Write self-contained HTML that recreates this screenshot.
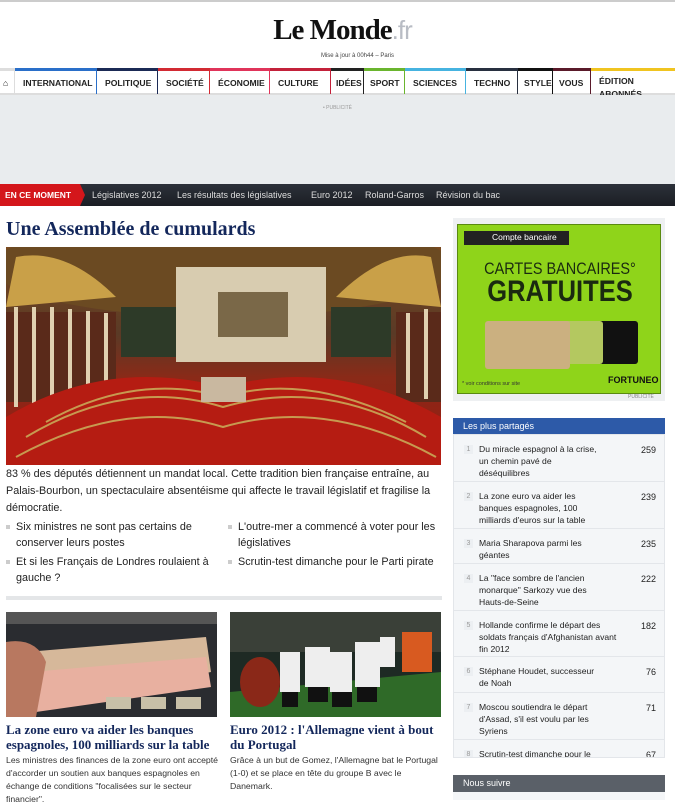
<!DOCTYPE html>
<html><head><meta charset="utf-8"><style>
*{margin:0;padding:0;box-sizing:border-box}
body{width:675px;height:800px;overflow:hidden;background:#fff;font-family:"Liberation Sans",Arial,sans-serif;position:relative;color:#222}
.abs{position:absolute}
.topline{left:0;top:0;width:675px;height:2px;background:#ccc}
.logo{left:0;width:675px;top:14px;text-align:center;font-family:"Liberation Serif",serif;font-weight:bold;font-size:29px;color:#111;letter-spacing:-1px;padding-left:10px}
.logo span{color:#b8bcc4;font-family:"Liberation Sans",sans-serif;font-weight:normal;font-size:26px}
.maj{left:0;width:675px;top:53px;text-align:center;font-size:6px;color:#444;padding-left:40px}
.nav{top:68px;left:0;width:675px;height:27px;border-bottom:2px solid #ddd}
.nav div{position:absolute;top:0;height:26px;border-top:3px solid;border-right:1px solid #ddd;font-size:8.6px;font-weight:bold;padding:7px 0 0 8px;color:#222;white-space:nowrap}
.pub{top:95px;left:0;width:675px;height:89px;background:#e9ecee}
.moment{top:184px;left:0;width:675px;height:22px;background:linear-gradient(#2c313a,#1b1e24);color:#fff;font-size:9px}
.moment .red{position:absolute;left:0;top:0;height:22px;width:80px;background:#d4161b;font-weight:bold;padding:6px 0 0 5px;font-size:8.5px}
.moment .red:after{content:"";position:absolute;right:-5px;top:0;border-left:5px solid #d4161b;border-top:11px solid transparent;border-bottom:11px solid transparent}
.moment span{position:absolute;top:6px;color:#ddd}
h1{position:absolute;left:6px;top:218px;font-family:"Liberation Serif",serif;font-size:20px;color:#13275b;font-weight:bold}
.p{font-size:10.8px;line-height:17px;color:#222}
.li{font-size:10.8px;line-height:16px;color:#222}
.li:before{content:"";position:absolute;left:-10px;top:6px;width:4px;height:4px;background:#ccc}
.h2{font-family:"Liberation Serif",serif;font-weight:bold;font-size:13px;line-height:15px;color:#13275b}
.sm{font-size:8.7px;line-height:13px;color:#333}
.side{left:453px;width:212px}
.row{position:absolute;left:0;width:212px;border-bottom:1px solid #e3e6ea;font-size:8.6px;line-height:12px;color:#222}
.row .n{position:absolute;left:10px;top:10px;width:9px;height:9px;background:#eceff2;font-size:7px;color:#999;text-align:center;line-height:9px}
.row .t{position:absolute;left:25px;top:8px;width:132px}
.row .c{position:absolute;right:10px;top:9px;font-size:9px}
</style></head><body>
<div class="abs topline"></div>
<div class="abs logo">Le Monde<span>.fr</span></div>
<div class="abs maj">Mise à jour à 00h44 – Paris</div>
<div class="abs nav">
<div style="left:0;width:15px;border-color:#ddd;padding-left:3px">&#8962;</div>
<div style="left:15px;width:82px;border-color:#2a6fc9">INTERNATIONAL</div>
<div style="left:97px;width:61px;border-color:#1b2a55">POLITIQUE</div>
<div style="left:158px;width:52px;border-color:#d22a33">SOCIÉTÉ</div>
<div style="left:210px;width:60px;border-color:#e0345a">ÉCONOMIE</div>
<div style="left:270px;width:61px;border-color:#c3213a">CULTURE</div>
<div style="left:331px;width:33px;border-color:#222;padding-left:5px">IDÉES</div>
<div style="left:364px;width:41px;border-color:#6ab52e;padding-left:6px">SPORT</div>
<div style="left:405px;width:61px;border-color:#46b3e0">SCIENCES</div>
<div style="left:466px;width:52px;border-color:#283040">TECHNO</div>
<div style="left:518px;width:35px;border-color:#111;padding-left:6px">STYLE</div>
<div style="left:553px;width:38px;border-color:#5a1a2a;padding-left:6px">VOUS</div>
<div style="left:591px;width:84px;border-color:#f0c420;line-height:13px;padding-top:4px;border-right:none">ÉDITION<br>ABONNÉS</div>
</div>
<div class="abs pub"><div style="text-align:center;font-size:5px;color:#999;margin-top:10px">• PUBLICITÉ</div></div>
<div class="abs moment"><div class="red">EN CE MOMENT</div>
<span style="left:92px">Législatives 2012</span><span style="left:177px">Les résultats des législatives</span><span style="left:311px">Euro 2012</span><span style="left:365px">Roland-Garros</span><span style="left:436px">Révision du bac</span></div>
<h1>Une Assemblée de cumulards</h1>
<svg class="abs" style="left:6px;top:247px" width="435" height="218" viewBox="0 0 435 218">
<defs><linearGradient id="g" x1="0" y1="0" x2="0" y2="1"><stop offset="0" stop-color="#7a4a20"/><stop offset=".4" stop-color="#5a3a26"/><stop offset=".6" stop-color="#8a2a18"/><stop offset="1" stop-color="#9a1810"/></linearGradient></defs>
<rect width="435" height="218" fill="url(#g)"/>
<ellipse cx="217" cy="20" rx="230" ry="50" fill="#6b4a22"/>
<path d="M10 10 Q60 0 110 50 L0 60Z" fill="#c9a048"/><path d="M425 10 Q380 0 330 50 L435 60Z" fill="#c9a048"/>
<rect x="170" y="20" width="150" height="95" fill="#d8ccb0"/>
<rect x="212" y="45" width="70" height="45" fill="#7a6848"/>
<rect x="115" y="60" width="55" height="50" fill="#2d3a28"/><rect x="325" y="60" width="60" height="50" fill="#2d3a28"/>
<rect x="0" y="65" width="110" height="90" fill="#5a2a1a"/><rect x="390" y="65" width="45" height="90" fill="#5a2a1a"/>
<g fill="#e0d0b0"><rect x="8" y="60" width="4" height="100"/><rect x="26" y="60" width="4" height="100"/><rect x="44" y="60" width="4" height="100"/><rect x="62" y="62" width="4" height="90"/><rect x="80" y="64" width="4" height="85"/><rect x="98" y="66" width="4" height="80"/><rect x="400" y="66" width="4" height="80"/><rect x="418" y="62" width="4" height="90"/></g>
<path d="M0 170 Q100 110 217 140 Q330 110 435 170 L435 218 L0 218Z" fill="#b51c12"/>
<g stroke="#c79a50" stroke-width="2" fill="none"><path d="M20 190 Q120 130 217 160 Q320 130 420 190"/><path d="M10 210 Q120 150 217 180 Q320 150 430 210"/><path d="M40 175 Q130 125 217 150 Q300 125 400 175"/></g>
<rect x="195" y="130" width="45" height="25" fill="#c9b8a0"/>
</svg>
<div class="abs p" style="left:6px;top:466px;width:432px">83 % des députés détiennent un mandat local. Cette tradition bien française entraîne, au Palais-Bourbon, un spectaculaire absentéisme qui affecte le travail législatif et fragilise la démocratie.</div>
<div class="abs li" style="left:16px;top:519px;width:195px">Six ministres ne sont pas certains de conserver leurs postes</div>
<div class="abs li" style="left:16px;top:554px;width:200px">Et si les Français de Londres roulaient à gauche ?</div>
<div class="abs li" style="left:238px;top:519px;width:205px">L'outre-mer a commencé à voter pour les législatives</div>
<div class="abs li" style="left:238px;top:554px;width:205px">Scrutin-test dimanche pour le Parti pirate</div>
<div class="abs" style="left:6px;top:596px;width:436px;height:4px;background:#e4e6e8"></div>
<svg class="abs" style="left:6px;top:612px" width="211" height="105" viewBox="0 0 211 105">
<rect width="211" height="105" fill="#2a2c30"/><rect y="0" width="211" height="12" fill="#555"/>
<path d="M20 40 L200 25 L205 60 L30 95Z" fill="#d6b89a"/><path d="M25 60 L200 45 L205 75 L30 100Z" fill="#e8b0a0"/>
<path d="M0 30 Q30 25 40 50 L30 105 L0 105Z" fill="#b87860"/>
<g fill="#c8c0a8"><rect x="100" y="85" width="25" height="12"/><rect x="135" y="85" width="25" height="12"/><rect x="170" y="85" width="25" height="12"/></g>
</svg>
<svg class="abs" style="left:230px;top:612px" width="211" height="105" viewBox="0 0 211 105">
<rect width="211" height="105" fill="#1e2a24"/><rect y="0" width="211" height="40" fill="#3a4038"/>
<path d="M0 80 L211 60 L211 105 L0 105Z" fill="#2f6a28"/>
<rect x="172" y="20" width="30" height="40" fill="#d85a20"/>
<ellipse cx="30" cy="70" rx="20" ry="25" fill="#8a2818"/>
<g fill="#eee"><rect x="50" y="40" width="20" height="40"/><rect x="75" y="35" width="25" height="40"/><rect x="100" y="40" width="22" height="40"/><rect x="125" y="30" width="25" height="45"/><rect x="150" y="25" width="15" height="30"/></g>
<g fill="#111"><rect x="52" y="80" width="16" height="15"/><rect x="78" y="75" width="20" height="15"/><rect x="102" y="80" width="20" height="15"/><rect x="127" y="75" width="20" height="15"/></g>
</svg>
<div class="abs h2" style="left:6px;top:722px;width:215px">La zone euro va aider les banques espagnoles, 100 milliards sur la table</div>
<div class="abs h2" style="left:230px;top:722px;width:215px">Euro 2012 : l'Allemagne vient à bout du Portugal</div>
<div class="abs sm" style="left:6px;top:754px;width:212px">Les ministres des finances de la zone euro ont accepté d'accorder un soutien aux banques espagnoles en échange de conditions "focalisées sur le secteur financier".</div>
<div class="abs sm" style="left:230px;top:754px;width:210px">Grâce à un but de Gomez, l'Allemagne bat le Portugal (1-0) et se place en tête du groupe B avec le Danemark.</div>

<div class="abs" style="left:453px;top:218px;width:212px;height:183px;background:#eef0f2"></div>
<div class="abs" style="left:457px;top:224px;width:204px;height:170px;background:#8fd41a;border:1px solid #5a8a10">
<div class="abs" style="left:6px;top:6px;width:105px;height:14px;background:#222;color:#fff;font-size:8.5px;padding:1px 0 0 28px">Compte bancaire</div>
<div class="abs" style="left:0;width:204px;top:34px;text-align:center;font-size:17px;color:#1a2a10;transform:scaleX(.85)">CARTES BANCAIRES°</div>
<div class="abs" style="left:0;width:204px;top:50px;text-align:center;font-size:30px;font-weight:bold;color:#1a2a10;transform:scaleX(.85)">GRATUITES</div>
<div class="abs" style="left:118px;top:96px;width:62px;height:43px;background:#111;border-radius:3px"></div>
<div class="abs" style="left:80px;top:96px;width:65px;height:43px;background:#b4c860;border-radius:3px"></div>
<div class="abs" style="left:27px;top:96px;width:85px;height:48px;background:#cbb080;border-radius:3px"></div>
<div class="abs" style="left:4px;top:156px;font-size:5.5px;color:#333">* voir conditions sur site</div>
<div class="abs" style="left:150px;top:150px;font-size:9px;font-weight:bold;color:#111">FORTUNEO</div>
</div>
<div class="abs" style="left:628px;top:394px;font-size:5px;color:#888">PUBLICITÉ</div>

<div class="abs side" style="top:418px;height:16px;background:#2d5aa8;color:#fff;font-size:9px;padding:3px 0 0 10px">Les plus partagés</div>
<div class="abs side" style="top:434px;height:324px;background:#f4f6f8;border:1px solid #e3e6ea;overflow:hidden">
<div class="row" style="top:0;height:47px"><span class="n">1</span><span class="t" style="width:125px">Du miracle espagnol à la crise, un chemin pavé de déséquilibres</span><span class="c">259</span></div>
<div class="row" style="top:47px;height:47px"><span class="n">2</span><span class="t" style="width:125px">La zone euro va aider les banques espagnoles, 100 milliards d'euros sur la table</span><span class="c">239</span></div>
<div class="row" style="top:94px;height:35px"><span class="n">3</span><span class="t" style="width:125px">Maria Sharapova parmi les géantes</span><span class="c">235</span></div>
<div class="row" style="top:129px;height:47px"><span class="n">4</span><span class="t" style="width:125px">La "face sombre de l'ancien monarque" Sarkozy vue des Hauts-de-Seine</span><span class="c">222</span></div>
<div class="row" style="top:176px;height:46px"><span class="n">5</span><span class="t" style="width:140px">Hollande confirme le départ des soldats français d'Afghanistan avant fin 2012</span><span class="c">182</span></div>
<div class="row" style="top:222px;height:36px"><span class="n">6</span><span class="t" style="width:125px">Stéphane Houdet, successeur de Noah</span><span class="c">76</span></div>
<div class="row" style="top:258px;height:47px"><span class="n">7</span><span class="t" style="width:125px">Moscou soutiendra le départ d'Assad, s'il est voulu par les Syriens</span><span class="c">71</span></div>
<div class="row" style="top:305px;height:30px;border:none"><span class="n">8</span><span class="t" style="width:125px">Scrutin-test dimanche pour le Parti pirate</span><span class="c">67</span></div>
</div>
<div class="abs side" style="top:775px;height:17px;background:#5a6068;color:#fff;font-size:9px;padding:3px 0 0 10px">Nous suivre</div>
<div class="abs side" style="top:792px;height:8px;background:#f4f6f8"></div>
</body></html>
